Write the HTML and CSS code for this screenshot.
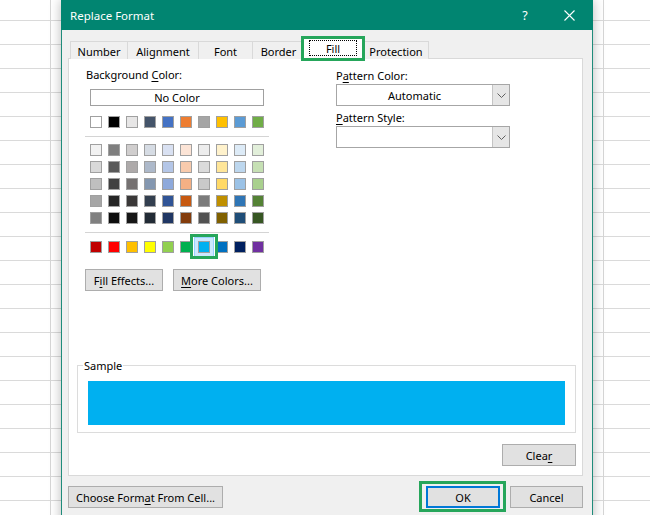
FILE: index.html
```html
<!DOCTYPE html>
<html>
<head>
<meta charset="utf-8">
<title>Replace Format</title>
<link rel="stylesheet" href="styles.css">
</head>
<body>
<div class="dialog">
  <div class="titlebar">
    <span class="title">Replace Format</span>
    <span class="help">?</span>
    <svg class="close" width="11" height="11" viewBox="0 0 11 11"><path d="M0.5 0.5L10.5 10.5M10.5 0.5L0.5 10.5" stroke="#fff" stroke-width="1.1" fill="none"/></svg>
  </div>
  <div class="body">
    <div class="tabs">
      <div class="tab t-number">Number</div>
      <div class="tab t-alignment">Alignment</div>
      <div class="tab t-font">Font</div>
      <div class="tab t-border">Border</div>
      <div class="tab t-fill active"><span class="focus">Fill</span></div>
      <div class="tab t-protection">Protection</div>
    </div>
    <div class="panel">
      <div class="top">
        <div class="bg-col">
          <div class="label">Background <u>C</u>olor:</div>
          <div class="nocolor">No Color</div>
          <div class="swatches theme">
            <span class="sw" style="background:#FFFFFF"></span><span class="sw" style="background:#000000"></span><span class="sw" style="background:#E7E6E6"></span><span class="sw" style="background:#44546A"></span><span class="sw" style="background:#4472C4"></span><span class="sw" style="background:#ED7D31"></span><span class="sw" style="background:#A5A5A5"></span><span class="sw" style="background:#FFC000"></span><span class="sw" style="background:#5B9BD5"></span><span class="sw" style="background:#70AD47"></span>
          </div>
          <div class="sep"></div>
          <div class="swatches tints">
            <span class="sw" style="background:#F2F2F2"></span><span class="sw" style="background:#7F7F7F"></span><span class="sw" style="background:#D0CECE"></span><span class="sw" style="background:#D6DCE4"></span><span class="sw" style="background:#D9E1F2"></span><span class="sw" style="background:#FCE4D6"></span><span class="sw" style="background:#EDEDED"></span><span class="sw" style="background:#FFF2CC"></span><span class="sw" style="background:#DDEBF7"></span><span class="sw" style="background:#E2EFDA"></span>
            <span class="sw" style="background:#D9D9D9"></span><span class="sw" style="background:#595959"></span><span class="sw" style="background:#AEAAAA"></span><span class="sw" style="background:#ADB9CA"></span><span class="sw" style="background:#B4C6E7"></span><span class="sw" style="background:#F8CBAD"></span><span class="sw" style="background:#DBDBDB"></span><span class="sw" style="background:#FFE699"></span><span class="sw" style="background:#BDD7EE"></span><span class="sw" style="background:#C6E0B4"></span>
            <span class="sw" style="background:#BFBFBF"></span><span class="sw" style="background:#404040"></span><span class="sw" style="background:#757171"></span><span class="sw" style="background:#8497B0"></span><span class="sw" style="background:#8EA9DB"></span><span class="sw" style="background:#F4B084"></span><span class="sw" style="background:#C9C9C9"></span><span class="sw" style="background:#FFD966"></span><span class="sw" style="background:#9BC2E6"></span><span class="sw" style="background:#A9D08E"></span>
            <span class="sw" style="background:#A6A6A6"></span><span class="sw" style="background:#262626"></span><span class="sw" style="background:#3A3838"></span><span class="sw" style="background:#333F4F"></span><span class="sw" style="background:#305496"></span><span class="sw" style="background:#C65911"></span><span class="sw" style="background:#7B7B7B"></span><span class="sw" style="background:#BF8F00"></span><span class="sw" style="background:#2F75B5"></span><span class="sw" style="background:#548235"></span>
            <span class="sw" style="background:#808080"></span><span class="sw" style="background:#0D0D0D"></span><span class="sw" style="background:#161616"></span><span class="sw" style="background:#222B35"></span><span class="sw" style="background:#203764"></span><span class="sw" style="background:#833C0C"></span><span class="sw" style="background:#525252"></span><span class="sw" style="background:#806000"></span><span class="sw" style="background:#1F4E78"></span><span class="sw" style="background:#375623"></span>
          </div>
          <div class="sep"></div>
          <div class="swatches standard">
            <span class="sw" style="background:#C00000"></span><span class="sw" style="background:#FF0000"></span><span class="sw" style="background:#FFC000"></span><span class="sw" style="background:#FFFF00"></span><span class="sw" style="background:#92D050"></span><span class="sw" style="background:#00B050"></span><span class="sw selected" style="background:#00B0F0"></span><span class="sw" style="background:#0070C0"></span><span class="sw" style="background:#002060"></span><span class="sw" style="background:#7030A0"></span>
          </div>
          <div class="btnrow">
            <button class="btn fx">F<u>i</u>ll Effects...</button>
            <button class="btn more"><u>M</u>ore Colors...</button>
          </div>
        </div>
        <div class="pattern-col">
          <div class="label">P<u>a</u>ttern Color:</div>
          <div class="select">
            <span class="value">Automatic</span>
            <span class="arrow"><svg width="9" height="5" viewBox="0 0 9 5"><path d="M0.5 0.5L4.5 4.5L8.5 0.5" stroke="#606060" fill="none"/></svg></span>
          </div>
          <div class="label label2"><u>P</u>attern Style:</div>
          <div class="select">
            <span class="value"></span>
            <span class="arrow"><svg width="9" height="5" viewBox="0 0 9 5"><path d="M0.5 0.5L4.5 4.5L8.5 0.5" stroke="#606060" fill="none"/></svg></span>
          </div>
        </div>
      </div>
      <div class="sample">
        <span class="legend">Sample</span>
        <div class="sample-fill"></div>
      </div>
      <div class="clear-row">
        <button class="btn clear">Clea<u>r</u></button>
      </div>
    </div>
    <div class="footer">
      <button class="btn choose">Choose Form<u>a</u>t From Cell...</button>
      <span class="spacer"></span>
      <button class="btn ok">OK</button>
      <button class="btn cancel">Cancel</button>
    </div>
  </div>
</div>
</body>
</html>
```

FILE: styles.css
```css
html, body {
  margin: 0;
  padding: 0;
  width: 650px;
  height: 515px;
  overflow: hidden;
}

body {
  position: relative;
  font-family: "Noto Sans", "Open Sans", sans-serif;
  font-size: 11px;
  color: #000;
  background-color: #ffffff;
  background-image:
    linear-gradient(to right, transparent 50px, #d6d6d6 50px, #d6d6d6 51px, transparent 51px, transparent 603px, #d6d6d6 603px, #d6d6d6 604px, transparent 604px),
    linear-gradient(to bottom, transparent 23px, #dadada 23px);
  background-size: 100% 100%, 100% 24px;
  background-position: 0 0, 0 -3px;
  background-repeat: no-repeat, repeat;
}

u { text-decoration: underline; text-underline-offset: 2px; }

.dialog {
  position: absolute;
  left: 61px;
  top: 0;
  width: 532px;
  height: 540px;
  box-sizing: border-box;
  border-left: 1px solid #1f8c7b;
  border-right: 1px solid #1f8c7b;
  background: #f0f0f0;
  box-shadow: 0 0 11px rgba(0, 0, 0, 0.28);
}

.titlebar {
  height: 30px;
  margin: 0 -1px;
  background: #018571;
  color: #fff;
  display: flex;
  align-items: center;
  padding-left: 9px;
}

.title { flex: 1; font-size: 11.5px; }

.help {
  width: 14px;
  text-align: center;
  font-size: 12.5px;
  margin-right: 32px;
}

.close { margin-right: 18px; display: block; }

.body {
  padding: 8px 9px 0 6px;
}

.tabs {
  display: flex;
  align-items: flex-end;
  height: 21px;
  margin-left: 2px;
  margin-bottom: -1px;
  position: relative;
  z-index: 1;
}

.tab {
  box-sizing: border-box;
  height: 18px;
  border: 1px solid #d9d9d9;
  border-bottom: none;
  border-right: none;
  background: #f0f0f0;
  display: flex;
  align-items: center;
  justify-content: center;
  padding-top: 2px;
  white-space: nowrap;
}

.t-number { width: 57px; }
.t-alignment { width: 71px; }
.t-font { width: 54px; }
.t-border { width: 52px; }
.t-protection { width: 66px; border-right: 1px solid #d9d9d9; }

.tab.active {
  width: 63px;
  height: 21px;
  margin: 0 -2px;
  background: #fff;
  border-right: 1px solid #d9d9d9;
  align-items: flex-start;
  padding-top: 1px;
  position: relative;
  z-index: 2;
}

.tab.active::after {
  content: "";
  position: absolute;
  left: -2px;
  right: -1px;
  top: -3px;
  bottom: -2px;
  border: 3px solid #26a65b;
}

.focus {
  box-sizing: border-box;
  width: 48px;
  height: 16px;
  border: 1px dotted #000;
  display: flex;
  align-items: center;
  justify-content: center;
  margin-left: -1px;
  padding-top: 1px;
}

.panel {
  box-sizing: border-box;
  margin-left: 0;
  width: 515px;
  height: 418px;
  background: #fff;
  border: 1px solid #d9d9d9;
}

.top {
  display: flex;
  align-items: flex-start;
}

.bg-col {
  margin-left: 17px;
  width: 184px;
  padding-top: 8px;
}

.label {
  height: 16px;
  line-height: 16px;
  white-space: nowrap;
}

.nocolor {
  box-sizing: border-box;
  margin: 6px 0 0 4px;
  width: 174px;
  height: 17px;
  border: 1px solid #a0a0a0;
  text-align: center;
  line-height: 16px;
}

.swatches {
  display: grid;
  grid-template-columns: repeat(10, 12px);
  column-gap: 6px;
  row-gap: 5px;
  margin-left: 4px;
}

.theme { margin-top: 10px; }
.tints { margin-top: 7px; }
.standard { margin-top: 8px; }

.sw {
  display: block;
  box-sizing: border-box;
  width: 12px;
  height: 12px;
  border: 1px solid #a0a0a0;
}

.sw.selected {
  position: relative;
  box-shadow: 0 0 0 3px #cce8ff, 0 0 0 4px #99d1ff;
}

.sw.selected::after {
  content: "";
  position: absolute;
  left: -9px;
  right: -9px;
  top: -8px;
  bottom: -7px;
  border: 3px solid #26a65b;
}

.sep {
  height: 1px;
  background: #d4d4d4;
  margin: 8px 0 0 -1px;
  width: 184px;
}

.btn {
  box-sizing: border-box;
  height: 22px;
  padding: 0;
  margin: 0;
  background: #e1e1e1;
  border: 1px solid #adadad;
  font-family: inherit;
  font-size: 11px;
  color: #000;
  white-space: nowrap;
}

.btnrow {
  display: flex;
  gap: 10px;
  margin: 16px 0 0 -1px;
}

.fx { width: 78px; }
.more { width: 88px; }

.pattern-col {
  margin-left: 66px;
  width: 174px;
  padding-top: 9px;
}

.label2 { margin-top: 4px; }

.select {
  box-sizing: border-box;
  height: 22px;
  border: 1px solid #a6a6a6;
  background: #fff;
  display: flex;
}

.select .value {
  flex: 1;
  text-align: center;
  line-height: 21px;
}

.select .arrow {
  box-sizing: border-box;
  width: 17px;
  background: #e6e6e6;
  border-left: 1px solid #c4c4c4;
  display: flex;
  align-items: center;
  justify-content: center;
}

.sample {
  box-sizing: border-box;
  margin: 74px 0 0 8px;
  width: 499px;
  height: 68px;
  border: 1px solid #dcdcdc;
  padding: 0 10px;
}

.legend {
  display: block;
  width: fit-content;
  height: 14px;
  line-height: 14px;
  margin: -7px 0 0 -5px;
  padding: 0 1px;
  background: #fff;
}

.sample-fill {
  margin-top: 8px;
  height: 44px;
  background: #00b0f0;
}

.clear-row {
  display: flex;
  justify-content: flex-end;
  margin: 11px 6px 0 0;
}

.clear { width: 74px; }

.footer {
  display: flex;
  align-items: center;
  margin-top: 10px;
}

.spacer { flex: 1; }

.choose { width: 155px; }

.ok {
  width: 74px;
  border: 2px solid #0078d7;
  position: relative;
}

.ok::after {
  content: "";
  position: absolute;
  left: -9px;
  right: -8px;
  top: -7px;
  bottom: -6px;
  border: 3px solid #26a65b;
}

.cancel {
  width: 73px;
  margin-left: 10px;
}
```
